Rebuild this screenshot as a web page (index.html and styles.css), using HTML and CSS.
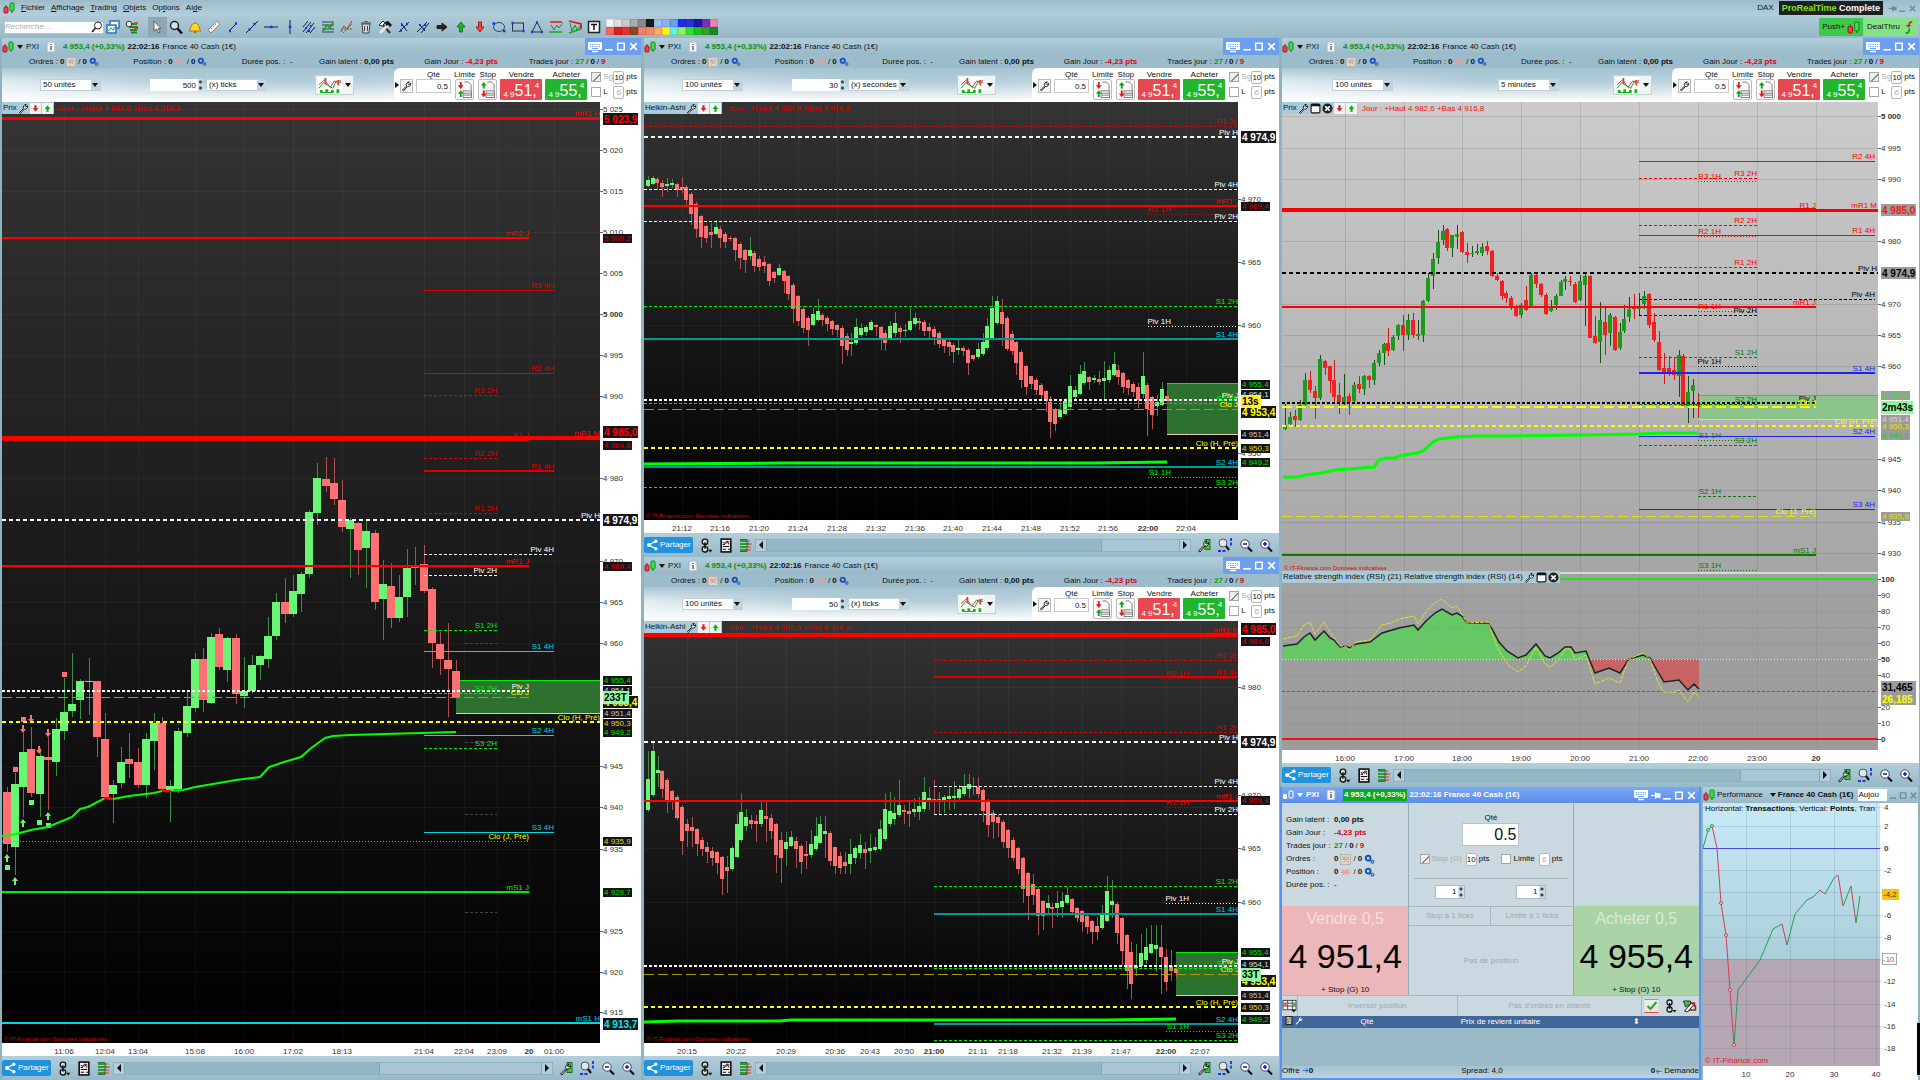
FILE: index.html
```html
<!DOCTYPE html>
<html lang="fr">
<head>
<meta charset="utf-8">
<title>ProRealTime Complete</title>
<link rel="stylesheet" href="styles.css">
</head>
<body>
<svg class="sprite" aria-hidden="true">
  <symbol id="i-candles" viewBox="0 0 12 12"><path d="M3 3v8M9 1v10" stroke="#444"/><rect x="1" y="5" width="4" height="6" rx="1" fill="#f0404a" stroke="#a01820"/><rect x="7" y="1" width="4" height="8" rx="1" fill="#3ee04a" stroke="#128a20"/></symbol>
  <symbol id="i-candles-white" viewBox="0 0 12 12"><rect x="1" y="5" width="4" height="5" rx="1" fill="#fff"/><rect x="7" y="2" width="4" height="7" rx="1" fill="none" stroke="#fff"/></symbol>
  <symbol id="i-info" viewBox="0 0 10 10"><rect x="1" y="0" width="8" height="10" rx="1" fill="#f4f4f4" stroke="#aab"/><path d="M5 4v4M5 2v1" stroke="#567" stroke-width="1.5"/></symbol>
  <symbol id="i-keyboard" viewBox="0 0 16 12"><rect x="1" y="1" width="14" height="8" rx="1" fill="#fff"/><path d="M3 3.500h10M3 5.500h10" stroke="#6c9ff0" stroke-dasharray="1.200 1"/><path d="M5 7.500h6" stroke="#6c9ff0"/><path d="M5 10.500h6" stroke="#fff" stroke-width="1.500"/></symbol>
  <symbol id="i-min" viewBox="0 0 10 10"><path d="M1 8h7" stroke="currentColor" stroke-width="1.500"/></symbol>
  <symbol id="i-max" viewBox="0 0 10 10"><rect x="1.500" y="2" width="6" height="6" fill="none" stroke="currentColor" stroke-width="1.300"/></symbol>
  <symbol id="i-close" viewBox="0 0 10 10"><path d="M2 2l6 6M8 2l-6 6" stroke="currentColor" stroke-width="1.500"/></symbol>
  <symbol id="i-pin" viewBox="0 0 10 10"><path d="M1 5h4" stroke="currentColor" stroke-width="1.200"/><path d="M5 2v6M5 3.500h4v3H5z" stroke="currentColor" fill="currentColor"/></symbol>
  <symbol id="i-gears" viewBox="0 0 12 12"><circle cx="4.500" cy="4.500" r="2.600" fill="none" stroke="#1c4fb4" stroke-width="2.200"/><circle cx="9.200" cy="8.500" r="1.500" fill="none" stroke="#2a66d0" stroke-width="1.400"/></symbol>
  <symbol id="i-cancel" viewBox="0 0 10 10"><rect x=".5" y=".5" width="9" height="9" fill="#dcd8d2" stroke="#b9b4b0"/><path d="M2 3h6M2 5h4M3 7.500l5-4M3 3.500l5 4" stroke="#d69a92"/></symbol>
  <symbol id="i-flat" viewBox="0 0 10 10"><path d="M1 3h8M1 5h8M2 7.500l6-5M2 3l6 4.500" stroke="#ec9c9c"/></symbol>
  <symbol id="i-wrench" viewBox="0 0 12 12"><path d="M1.500 10.500L6 6c-1-2 .5-4.500 3-4.500L7.500 3.500l1 1 2-1.500c.5 2.500-1.500 4-3.500 3.500L2.800 11.300z" fill="#fff" stroke="#111"/></symbol>
  <symbol id="i-wrench-white" viewBox="0 0 12 12"><path d="M1.500 10.500L6 6c-1-2 .5-4.500 3-4.500L7.500 3.500l1 1 2-1.500c.5 2.500-1.500 4-3.500 3.500L2.800 11.300z" fill="#fff"/></symbol>
  <symbol id="i-wrench-green" viewBox="0 0 14 14"><rect x="8" y="1" width="5" height="10" fill="#3cc43c" stroke="#207020"/><path d="M1.500 12.500L7 7c-1-2 .5-4.500 3-4.500L8.500 4.500l1 1 2-1.500c.5 2.500-1.500 4-3.500 3.500L3 13.500z" fill="#eee" stroke="#111"/></symbol>
  <symbol id="i-sell" viewBox="0 0 10 10"><rect width="10" height="10" fill="#f6f2f2"/><path d="M5 2v3" stroke="#e02020" stroke-width="2"/><path d="M2.500 4.500h5L5 8z" fill="#e02020"/></symbol>
  <symbol id="i-buy" viewBox="0 0 10 10"><rect width="10" height="10" fill="#f2f6f2"/><path d="M5 8V5" stroke="#12a812" stroke-width="2"/><path d="M2.500 5.500h5L5 2z" fill="#12a812"/></symbol>
  <symbol id="i-window" viewBox="0 0 10 10"><rect x="1" y="1" width="8" height="8" rx="1" fill="#fff" stroke="#111"/><path d="M1 2h8" stroke="#111" stroke-width="2"/></symbol>
  <symbol id="i-x-round" viewBox="0 0 10 10"><circle cx="5" cy="5" r="4.600" fill="#222"/><path d="M3 3l4 4M7 3L3 7" stroke="#fff" stroke-width="1.500"/></symbol>
  <symbol id="i-limit" viewBox="0 0 16 18"><path d="M8 1h4l3 3v6" fill="#fff" stroke="#777"/><rect x="6.500" y="10.500" width="9" height="7" fill="#fff" stroke="#777"/><path d="M7 13h8M7 15h8" stroke="#777"/><path d="M4 1v4" stroke="#e01818" stroke-width="2"/><path d="M1 4.500h6L4 8.500z" fill="#e01818"/><path d="M4 17v-4" stroke="#12a012" stroke-width="2"/><path d="M1 13.500h6L4 9.800z" fill="#12a012"/></symbol>
  <symbol id="i-stop" viewBox="0 0 16 18"><path d="M8 1h4l3 3v6" fill="#fff" stroke="#777"/><rect x="6.500" y="10.500" width="9" height="7" fill="#fff" stroke="#777"/><path d="M7 13h8M7 15h8" stroke="#777"/><path d="M4 8V4" stroke="#12a012" stroke-width="2"/><path d="M1 4.800h6L4 1z" fill="#12a012"/><path d="M4 10v4" stroke="#e01818" stroke-width="2"/><path d="M1 13.500h6L4 17.300z" fill="#e01818"/></symbol>
  <symbol id="i-chart" viewBox="0 0 26 18"><rect width="26" height="18" fill="#fff"/><path d="M1 8l6-5 6 8 5-7 3 2 4-3" fill="none" stroke="#c03030"/><path d="M1 12l5-6 5 3 5 3 4-8 5 2" fill="none" stroke="#189018"/><path d="M8 1v6M22 3v6" stroke="#e04040" stroke-width="2"/><path d="M2 17v-3h3v2h3v-3h3v3h3v-2h3v3h3v-4h3v4z" fill="#12b812"/></symbol>
  <symbol id="i-share" viewBox="0 0 12 12"><path d="M10 2L3 6l7 4" fill="none" stroke="#fff" stroke-width="1.300"/><circle cx="3" cy="6" r="2" fill="#fff"/><circle cx="9.800" cy="2.200" r="1.700" fill="#fff"/><circle cx="9.800" cy="9.800" r="1.700" fill="#fff"/></symbol>
  <symbol id="i-chain" viewBox="0 0 12 14"><rect x="2.500" y="1" width="5" height="5" rx="2" fill="#ddd" stroke="#111" stroke-width="1.300"/><rect x="2.500" y="8" width="5" height="5" rx="2" fill="#ddd" stroke="#111" stroke-width="1.300"/><path d="M5 4v6" stroke="#111" stroke-width="1.300"/><path d="M8 11h4l-2 2.500z" fill="#111"/></symbol>
  <symbol id="i-news" viewBox="0 0 12 14"><rect x="1.500" y="1" width="9" height="12" fill="#eee" stroke="#111" stroke-width="1.500"/><path d="M3 4l2 1 2-2 2 3" fill="none" stroke="#333"/><path d="M6 5l3-2" stroke="#c02020"/><path d="M3 8h6M3 10.500h3M8 10.500h2M3 6h2" stroke="#111"/></symbol>
  <symbol id="i-book" viewBox="0 0 14 14"><path d="M1 2.500h7M1 5.500h9M1 8.500h7M1 11.500h8" stroke="#28a028" stroke-width="2"/><path d="M8 2.500h3M10 5.500h3M8 8.500h4M9 11.500h3" stroke="#d87070" stroke-width="2"/><path d="M1 1h7v12H1" stroke="#486048" fill="none"/></symbol>
  <symbol id="i-zoomxy" viewBox="0 0 16 16"><circle cx="6" cy="6" r="4" fill="#dfe8ee" stroke="#555"/><path d="M9 9l3 4" stroke="#111" stroke-width="2.200"/><path d="M14 1v9M1 14h8" stroke="#2030e0" stroke-width="1.800" stroke-dasharray="3 1.500"/></symbol>
  <symbol id="i-zoomout" viewBox="0 0 14 14"><circle cx="6" cy="5.500" r="4.200" fill="#fff" stroke="#445"/><path d="M4 5.500h4" stroke="#1020d0" stroke-width="1.600"/><path d="M9 9l4 4" stroke="#111" stroke-width="2.200"/></symbol>
  <symbol id="i-zoomin" viewBox="0 0 14 14"><circle cx="6" cy="5.500" r="4.200" fill="#fff" stroke="#445"/><path d="M4 5.500h4M6 3.500v4" stroke="#1020d0" stroke-width="1.600"/><path d="M9 9l4 4" stroke="#111" stroke-width="2.200"/></symbol>
  <symbol id="i-search" viewBox="0 0 12 12"><circle cx="7" cy="4.500" r="3.500" fill="none" stroke="#222"/><path d="M4.500 7L1 11" stroke="#222" stroke-width="1.600"/></symbol>
  <symbol id="i-lists" viewBox="0 0 14 14"><rect x="4" y="1" width="9" height="7" fill="#fff" stroke="#2a6ac0" stroke-width="1.400"/><rect x="1" y="5" width="9" height="8" fill="#dff0ff" stroke="#2a6ac0" stroke-width="1.400"/><path d="M2 11l3-3 2 2 3-4" stroke="#28a028" fill="none"/></symbol>
  <symbol id="i-depth" viewBox="0 0 14 14"><path d="M5 4h7M4 7h9M5 10h7M6 12.500h6" stroke="#208a20" stroke-width="1.800"/><path d="M9 3h4M9 8.500h4" stroke="#d04040" stroke-width="1.500"/><circle cx="4" cy="4" r="2.800" fill="#eee" stroke="#333"/></symbol>
  <symbol id="i-cursor" viewBox="0 0 14 14"><path d="M4 1v10l2.500-2 2 4 1.500-1-2-3.500h3z" fill="#f4f4f4" stroke="#566"/></symbol>
  <symbol id="i-loupe" viewBox="0 0 14 14"><circle cx="5.500" cy="5.500" r="4" fill="#d5e2ea" stroke="#222" stroke-width="1.500"/><path d="M8.500 8.500l4.500 5" stroke="#111" stroke-width="2.500"/></symbol>
  <symbol id="i-bell" viewBox="0 0 14 14"><path d="M1 11c2-1 1.500-8 6-8s4 7 6 8z" fill="#ffd52a" stroke="#a07a10"/><circle cx="7" cy="12" r="1.300" fill="#a07a10"/></symbol>
  <symbol id="i-ruler" viewBox="0 0 14 14"><path d="M1 10L10 1l3 3-9 9z" fill="#f2efe6" stroke="#888"/><path d="M4 8l1 1M6 6l1 1M8 4l1 1" stroke="#888"/></symbol>
  <symbol id="i-segment" viewBox="0 0 14 14"><path d="M4 10l6-6" stroke="#123" /><path d="M3 11h2M9 3.500h2" stroke="#1a30f0" stroke-width="2.500"/></symbol>
  <symbol id="i-line" viewBox="0 0 14 14"><path d="M1 13L13 1" stroke="#123"/><path d="M3.500 9.500h2M8.500 4h2" stroke="#1a30f0" stroke-width="2.500"/></symbol>
  <symbol id="i-hline" viewBox="0 0 14 14"><path d="M0 7h14" stroke="#123"/><path d="M6 7h2.500" stroke="#1a30f0" stroke-width="2.500"/></symbol>
  <symbol id="i-vline" viewBox="0 0 14 14"><path d="M7 0v14" stroke="#123"/><path d="M5.800 7h2.400" stroke="#1a30f0" stroke-width="2.500"/></symbol>
  <symbol id="i-channel" viewBox="0 0 14 14"><path d="M1 12L9 2M4 13l8-10M1 7l5-6M8 13l5-6" stroke="#123"/><path d="M3 8h2M8 6h2M6 11h2" stroke="#1a30f0" stroke-width="2"/></symbol>
  <symbol id="i-fibo" viewBox="0 0 14 14"><path d="M1 2h12M1 5h12M1 9h12M1 12h12" stroke="#345"/><path d="M2 11l4-6 3 3 3-5" stroke="#1a9a1a" stroke-width="1.500" fill="none"/></symbol>
  <symbol id="i-zigzag" viewBox="0 0 14 14"><path d="M1 12l3-6 3 3 5-8" stroke="#c03030" fill="none"/><path d="M1 9h12M3 13l9-9" stroke="#1a8a1a" stroke-dasharray="2 1"/></symbol>
  <symbol id="i-trash" viewBox="0 0 14 14"><path d="M3 4h8l-1 9H4z" fill="#d8d8d8" stroke="#444"/><path d="M2 3h10M5.500 1.500h3M5.500 6v5M8.500 6v5" stroke="#444"/></symbol>
  <symbol id="i-tools" viewBox="0 0 14 14"><path d="M4 4l8 9" stroke="#333" stroke-width="2"/><path d="M1 5l4-4 2 2-3 3z" fill="#fff" stroke="#333"/><path d="M10 5L2 13" stroke="#eee" stroke-width="2.500"/><path d="M7 2l3-1 4 4-2 2-2-2-2 1z" fill="#111"/></symbol>
  <symbol id="i-cross" viewBox="0 0 14 14"><path d="M2 12L12 2M4 3l6 8" stroke="#123"/><path d="M3 10.500h2M9 4h2M4 5h2" stroke="#1a30f0" stroke-width="2.500"/></symbol>
  <symbol id="i-pitch" viewBox="0 0 14 14"><path d="M1 12L11 2M5 13l8-10M3 4l6 7" stroke="#123"/><path d="M3 5h2M8 5h2M7 9h2" stroke="#1a30f0" stroke-width="2"/></symbol>
  <symbol id="i-right" viewBox="0 0 14 14"><path d="M2 5.500h5V3l5 4-5 4V8.500H2z" fill="#222" stroke="#222"/></symbol>
  <symbol id="i-up" viewBox="0 0 14 14"><path d="M5.500 12V7H3L7 2l4 5H8.500v5z" fill="#18b828" stroke="#0a7a16"/></symbol>
  <symbol id="i-down" viewBox="0 0 14 14"><path d="M5.500 2v5H3l4 5 4-5H8.500V2z" fill="#f04040" stroke="#b01818"/></symbol>
  <symbol id="i-ellipse" viewBox="0 0 14 14"><ellipse cx="7" cy="7" rx="5.500" ry="4.500" fill="none" stroke="#345"/><path d="M.5 3.500h2.500M11 11h2.500" stroke="#1a30f0" stroke-width="2.500"/></symbol>
  <symbol id="i-rect" viewBox="0 0 14 14"><rect x="1.500" y="3" width="11" height="8" fill="none" stroke="#234"/><path d="M.5 3h2M11.500 11h2" stroke="#1a30f0" stroke-width="2.500"/></symbol>
  <symbol id="i-tri" viewBox="0 0 14 14"><path d="M2 12L7 2l5 10z" fill="none" stroke="#234"/><path d="M1 12h2M11 12h2M6 2.500h2" stroke="#1a30f0" stroke-width="2.500"/></symbol>
  <symbol id="i-range" viewBox="0 0 14 14"><path d="M1 2h12" stroke="#e01818" stroke-width="1.500"/><path d="M0 12h13" stroke="#12b012" stroke-width="1.500"/><path d="M2 5l3 5 3-5 2 3 4-5" fill="none" stroke="#189018"/></symbol>
  <symbol id="i-wedge" viewBox="0 0 14 14"><path d="M1 1l12 3v5" stroke="#e01818" stroke-width="1.800" fill="none"/><path d="M1 13L13 9" stroke="#12b012" stroke-width="1.800"/><path d="M2 3l2 8 3-6 2 5 3-4" fill="none" stroke="#189018"/></symbol>
  <symbol id="i-note" viewBox="0 0 14 14"><rect x="1.500" y="1.500" width="11" height="11" fill="#f6f6f6" stroke="#222" stroke-width="1.500"/><path d="M4 4.500h6M7 4.500V10" stroke="#111" stroke-width="1.500"/></symbol>
  <symbol id="i-deal" viewBox="0 0 12 14"><path d="M10 1c-4 0-4 4-4 6" stroke="#d02020" stroke-width="1.800" fill="none"/><path d="M3 5h6" stroke="#d02020"/><path d="M3 13c3 0 4-2 4-5" stroke="#189018" stroke-width="1.800" fill="none"/></symbol>
  <symbol id="i-grid" viewBox="0 0 16 14"><rect x="1" y="1" width="14" height="10" fill="#f4f4f4" stroke="#444"/><path d="M1 4h14M1 7h14M6 1v10M11 1v10" stroke="#444"/><rect x="2" y="4" width="4" height="3" fill="#f06060"/><rect x="11" y="4" width="4" height="3" fill="#40c040"/><path d="M10 11h5l-2.500 3z" fill="#111"/></symbol>
  <symbol id="i-confirm" viewBox="0 0 14 14"><rect x="0" y="0" width="14" height="7" fill="#def4de"/><rect x="0" y="7" width="14" height="7" fill="#f6dcdc"/><path d="M0 13.500h14" stroke="#e04848"/><path d="M0 .5h14" stroke="#60c060"/><path d="M3 7l3 3 6-7" stroke="#28a828" stroke-width="2" fill="none"/></symbol>
  <symbol id="i-export" viewBox="0 0 14 14"><path d="M1 2h7v3L3 8z" fill="#3cc43c" stroke="#333"/><path d="M8 4h4v3h1v4H6" fill="none" stroke="#a02020" stroke-width="1.500"/><path d="M2 12l7-8 2 2-6 7z" fill="#eee" stroke="#222"/></symbol>
</svg>

<header class="app-head">
  <nav class="menubar">
    <svg class="ico"><use href="#i-candles"/></svg>
    <a href="#"><u>F</u>ichier</a><a href="#"><u>A</u>ffichage</a><a href="#"><u>T</u>rading</a><a href="#"><u>O</u>bjets</a><a href="#">Op<u>t</u>ions</a><a href="#">Ai<u>d</u>e</a>
    <div class="brand"><span>DAX</span><span class="badge"><em>ProRealTime</em> Complete</span>
      <span class="sysbtns"><svg><use href="#i-pin"/></svg><svg><use href="#i-min"/></svg><svg><use href="#i-close"/></svg></span></div>
  </nav>
  <div class="toolbar">
    <label class="search"><input type="text" placeholder="Recherche ..." aria-label="Recherche"><svg><use href="#i-search"/></svg></label>
    <div class="tools" id="tools"></div>
    <div class="palette" id="palette"></div>
    <div class="quick"><button class="push">Push+ <svg><use href="#i-candles"/></svg></button><button class="deal">DealThru <svg><use href="#i-deal"/></svg></button></div>
  </div>
</header>

<template id="chart-window">
  <header class="titlebar">
    <svg class="ico"><use href="#i-candles"/></svg><span class="caret"></span><span>PXI</span>
    <svg class="info"><use href="#i-info"/></svg>
    <b class="quote">4 953,4 (+0,33%)</b><b>22:02:16</b><span>France 40 Cash (1€)</span>
    <div class="winbtns"><button aria-label="Clavier"><svg class="kbd"><use href="#i-keyboard"/></svg></button><button aria-label="Réduire"><svg><use href="#i-min"/></svg></button><button aria-label="Agrandir"><svg><use href="#i-max"/></svg></button><button aria-label="Fermer"><svg><use href="#i-close"/></svg></button></div>
  </header>
  <div class="stats">
    <span>Ordres : <b>0</b> <svg><use href="#i-cancel"/></svg> / <b>0</b><svg><use href="#i-gears"/></svg></span>
    <span>Position : <b>0</b> <svg><use href="#i-flat"/></svg> / <b>0</b><svg><use href="#i-gears"/></svg></span>
    <span>Durée pos. : &nbsp;-</span>
    <span>Gain latent : <b>0,00 pts</b></span>
    <span>Gain Jour : <b class="neg">-4,23 pts</b></span>
    <span>Trades jour : <b class="pos">27</b> / <b>0</b> / <b class="neg">9</b></span>
  </div>
  <div class="controls">
    <span class="select units"><select aria-label="Unités affichées"><option></option></select></span>
    <span class="period"><input class="amount" type="text" aria-label="Nombre"><span class="spin"></span><span class="select"><select class="step" aria-label="Unité de temps"><option></option></select></span></span>
    <button class="style-btn" aria-label="Style du graphique"><svg><use href="#i-chart"/></svg><span class="caret"></span></button>
    <div class="ticket">
      <span class="caret side"></span>
      <button class="flatbtn" aria-label="Réglages"><svg><use href="#i-wrench"/></svg></button>
      <label class="col qty">Qté<input type="text" value="0.5"></label>
      <label class="col">Limite<button class="order"><svg><use href="#i-limit"/></svg></button></label>
      <label class="col">Stop<button class="order"><svg><use href="#i-stop"/></svg></button></label>
      <label class="col">Vendre<button class="deal-btn sell"><small>4 9</small>51,<sup>4</sup></button></label>
      <label class="col">Acheter<button class="deal-btn buy"><small>4 9</small>55,<sup>4</sup></button></label>
      <div class="guards">
        <label class="off"><input type="checkbox" checked disabled>Sg</label><label class="pts"><input type="text" value="10">pts</label>
        <label><input type="checkbox">L</label><label class="pts"><input type="text" value="6" disabled>pts</label>
      </div>
    </div>
  </div>
  <div class="plot">
    <svg class="canvas"></svg>
    <div class="legend"><span class="name"></span><svg><use href="#i-wrench"/></svg><span class="extra"><svg><use href="#i-window"/></svg><svg><use href="#i-x-round"/></svg></span><svg><use href="#i-sell"/></svg><svg><use href="#i-buy"/></svg></div>
  </div>
  <footer class="bottombar">
    <button class="share"><svg><use href="#i-share"/></svg>Partager</button>
    <svg><use href="#i-chain"/></svg><svg><use href="#i-news"/></svg><svg><use href="#i-book"/></svg>
    <div class="scroll"><button class="arrow left" aria-label="Reculer"></button><div class="track"><div class="thumb"></div></div><button class="arrow right" aria-label="Avancer"></button></div>
    <svg><use href="#i-wrench-green"/></svg><svg class="big"><use href="#i-zoomxy"/></svg><svg><use href="#i-zoomout"/></svg><svg><use href="#i-zoomin"/></svg>
  </footer>
</template>

<main class="desk">
  <div class="column"><section class="window chart" data-chart="ticks500"></section></div>
  <div class="column mid">
    <section class="window chart" data-chart="sec30"></section>
    <section class="window chart" data-chart="ticks50"></section>
  </div>
  <div class="column right">
    <section class="window chart light" data-chart="min5"></section>
    <div class="pair">
      <section class="window ordering">
        <header class="titlebar active">
          <svg class="ico"><use href="#i-candles-white"/></svg><span class="caret"></span><b>PXI</b>
          <svg class="info"><use href="#i-info"/></svg><b class="quote">4 953,4 (+0,33%)</b><b>22:02:16 France 40 Cash (1€)</b>
          <div class="winbtns"><button aria-label="Clavier"><svg class="kbd"><use href="#i-keyboard"/></svg></button><button aria-label="Épingler"><svg><use href="#i-pin"/></svg></button><button aria-label="Réduire"><svg><use href="#i-min"/></svg></button><button aria-label="Agrandir"><svg><use href="#i-max"/></svg></button><button aria-label="Fermer"><svg><use href="#i-close"/></svg></button></div>
        </header>
        <div class="deal-grid">
          <dl class="summary">
            <dt>Gain latent :</dt><dd><b>0,00 pts</b></dd>
            <dt>Gain Jour :</dt><dd><b class="neg">-4,23 pts</b></dd>
            <dt>Trades jour :</dt><dd><b class="pos">27</b> / <b>0</b> / <b class="neg">9</b></dd>
            <dt>Ordres :</dt><dd><b>0</b> <svg><use href="#i-cancel"/></svg> / <b>0</b><svg><use href="#i-gears"/></svg></dd>
            <dt>Position :</dt><dd><b>0</b> <svg><use href="#i-flat"/></svg> / <b>0</b><svg><use href="#i-gears"/></svg></dd>
            <dt>Durée pos. :</dt><dd>-</dd>
          </dl>
          <div class="setup">
            <label class="bigqty">Qté<input type="text" value="0.5"></label>
            <div class="guardline">
              <label class="off"><input type="checkbox" checked disabled>Stop (G)</label><label class="pts"><input type="text" value="10">pts</label>
              <label><input type="checkbox">Limite</label><label class="pts"><input type="text" value="6" disabled>pts</label>
            </div>
            <div class="tickline">
              <span><input type="text" value="1" aria-label="Ticks du stop"><i class="spin"></i></span>
              <span><input type="text" value="1" aria-label="Ticks de la limite"><i class="spin"></i></span>
            </div>
          </div>
          <div class="blank"></div>
          <button class="trade sell"><span>Vendre 0,5</span><strong>4 951,4</strong><small>+ Stop (G) 10</small></button>
          <div class="middle">
            <button disabled>Stop à 1 ticks</button><button disabled>Limite à 1 ticks</button>
            <button class="wide" disabled>Pas de position</button>
          </div>
          <button class="trade buy"><span>Acheter 0,5</span><strong>4 955,4</strong><small>+ Stop (G) 10</small></button>
        </div>
        <div class="actions">
          <button aria-label="Affichage"><svg><use href="#i-grid"/></svg></button>
          <button class="grow" disabled>Inverser position</button><button class="grow wide" disabled>Pas d'ordres en attente</button>
          <span class="tail"><svg><use href="#i-confirm"/></svg><svg><use href="#i-chain"/></svg><svg><use href="#i-export"/></svg></span>
        </div>
        <table class="positions"><thead><tr><th><svg><use href="#i-news"/></svg><svg><use href="#i-wrench-white"/></svg></th><th>Qté</th><th>Prix de revient unitaire</th><th>⬍</th></tr></thead></table>
        <footer class="spread"><span>Offre <i>➔</i><b>0</b></span><span>Spread: 4,0</span><span><b>0</b><i class="flip">➔</i> Demande</span></footer>
      </section>
      <section class="window perf">
        <header class="titlebar"><svg class="ico"><use href="#i-candles"/></svg><span>Performance</span><span class="caret"></span><b>France 40 Cash (1€)</b><span class="period-cut">Aujou</span>
          <div class="sysbtns"><svg><use href="#i-min"/></svg><svg><use href="#i-max"/></svg><svg><use href="#i-close"/></svg></div></header>
        <div class="plot"><svg class="canvas" id="perf"></svg><p class="caption">Horizontal: <b>Transactions</b>, Vertical: <b>Points</b>, Tran</p></div>
      </section>
      <span class="edge"></span>
    </div>
  </div>
</main>
<script src="charts.js"></script>
</body>
</html>
```

FILE: styles.css
```css
* { box-sizing: border-box; }
html, body { height: 100%; margin: 0; }
body {
  display: flex; flex-direction: column; min-height: 100vh; overflow: hidden;
  font: 8px/10px "Liberation Sans", Arial, sans-serif; color: #111; background: #8fb2c1;
}
button, input, select { font: inherit; color: inherit; margin: 0; padding: 0; border: 0; border-radius: 0; background: none; }
button { cursor: pointer; }
svg { display: block; flex: none; }
.sprite { position: absolute; width: 0; height: 0; }
.neg { color: #e00010; }
.pos { color: #0a9a14; }
.caret { flex: none; width: 0; height: 0; border: 3px solid transparent; border-top: 4px solid #111; border-bottom: 0; }
.caret.side { border: 3px solid transparent; border-left: 4px solid #111; border-right: 0; }

/* application header */
.app-head { flex: none; }
.menubar { display: flex; align-items: center; gap: 6px; height: 16px; padding: 0 3px; background: linear-gradient(#9dbccb, #b4cfdb); }
.menubar a { color: #111; text-decoration: none; }
.menubar .ico { width: 12px; height: 12px; }
.brand { display: flex; align-items: center; gap: 5px; margin-left: auto; }
.badge { padding: 2px 3px; background: #1d2123; color: #fff; font-weight: bold; font-size: 9px; }
.badge em { font-style: normal; color: #8de01c; }
.sysbtns { display: flex; gap: 1px; color: #6d8894; }
.sysbtns svg { width: 9px; height: 9px; }
.toolbar { display: flex; align-items: center; height: 22px; padding: 0 2px 0 4px; background: linear-gradient(#aecad6, #97b8c7); }
.search { display: flex; align-items: center; width: 100px; height: 13px; background: #fff; border: 1px solid #b6c6cf; }
.search input { flex: 1; min-width: 0; outline: 0; }
.search input::placeholder { color: #aaa; font-style: italic; opacity: 1; }
.search svg { width: 12px; height: 12px; }
.tools { display: flex; }
.tools button { width: 19px; height: 20px; padding: 3px 2px; }
.tools button.on { background: #8da7b4; }
.tools button:nth-child(2) { margin-right: 6px; }
.tools svg { width: 14px; height: 14px; }
.palette { display: grid; grid-template-columns: repeat(14, 8px); grid-auto-rows: 8px; margin-left: 2px; }
.palette button { border: 1px solid rgba(0, 0, 0, .1); }
.quick { display: flex; gap: 1px; margin-left: auto; }
.quick button { display: flex; align-items: center; gap: 2px; height: 18px; padding: 0 3px; }
.quick svg { width: 13px; height: 13px; }
.push { background: #3fc94b; }
.deal { background: #85e387; }

/* desktop and windows */
.desk { flex: 1; min-height: 0; display: grid; grid-template-columns: 642fr 638fr 640fr; }
.column { display: grid; grid-auto-rows: minmax(0, 1fr); min-width: 0; min-height: 0; }
.column.mid { grid-template-rows: minmax(0, 519fr) minmax(0, 523fr); }
.column.right { grid-template-rows: minmax(0, 749fr) minmax(0, 293fr); }
.window { display: flex; flex-direction: column; min-width: 0; min-height: 0; border: solid #8fb2c1; border-width: 0 1px 0 2px; background: #9bbac8; overflow: hidden; }
.titlebar { flex: none; display: flex; align-items: center; gap: 3px; height: 17px; background: linear-gradient(#b2cedb, #98b9c8); white-space: nowrap; }
.titlebar .ico { width: 12px; height: 12px; }
.titlebar .info { width: 10px; height: 10px; margin: 0 4px; }
.quote { color: #0a8f12; }
.winbtns { display: flex; align-items: center; gap: 1px; height: 100%; margin-left: auto; padding: 0 2px; background: #6c9ff0; color: #fff; }
.winbtns svg { width: 11px; height: 11px; }
.winbtns .kbd { width: 16px; height: 12px; }
.stats { flex: none; display: grid; grid-template-columns: 104fr 108fr 77fr 105fr 104fr 112fr; align-items: center; height: 13px; padding-left: 27px; background: #9cbccb; white-space: nowrap; }
.stats span { display: flex; align-items: center; gap: 2px; }
.stats svg { width: 10px; height: 10px; }
.controls { flex: none; display: flex; align-items: center; height: 34px; padding-left: 38px; background: linear-gradient(rgba(164, 194, 208, .9), rgba(255, 255, 255, .1) 40%, #fff), linear-gradient(90deg, #dce9ee, #a9c7d4 30%, #a9c7d4 50%, #dce9ee); }
.select { position: relative; display: flex; width: 61px; height: 12px; background: #fff; border: 1px solid #c3d0d7; }
.select select { appearance: none; width: 100%; padding-left: 2px; outline: 0; }
.select::before { content: ""; position: absolute; right: 0; top: 0; width: 9px; height: 10px; background: #bdd6e2; pointer-events: none; }
.select::after { content: ""; position: absolute; right: 2px; top: 3px; border: 3px solid transparent; border-top: 4px solid #111; border-bottom: 0; pointer-events: none; }
.period { display: flex; width: 117px; margin: 0 48px 0 49px; }
.period .select { margin-left: auto; }
.amount { width: 48px; height: 12px; background: #fff; text-align: right; padding-right: 2px; }
.spin { flex: none; width: 5px; height: 12px; background: radial-gradient(circle at 50% 3px, #345 1px, transparent 2px), radial-gradient(circle at 50% 9px, #345 1px, transparent 2px), #c9dde6; }
.single .amount, .single .spin { display: none; }
.single .units { margin-left: 12px; }
.single .period { justify-content: flex-end; }
.single .style-btn { margin-left: 6px; }
.style-btn { display: flex; align-items: center; gap: 3px; height: 20px; padding: 0 2px; background: #eef3f5; border: 1px solid #c6d2d8; }
.style-btn svg { width: 24px; height: 17px; }
.ticket { display: flex; align-items: flex-start; gap: 3px; width: 247px; height: 100%; margin-left: auto; padding-top: 2px; background: #fff; border-radius: 6px 0 0 6px; }
.ticket .side { margin: 12px -2px 0 1px; }
.flatbtn { margin-top: 9px; padding: 0; width: 13px; height: 14px; border: 1px solid #bbb; background: #f6f6f6; }
.flatbtn svg { width: 11px; height: 12px; }
.col { display: flex; flex-direction: column; align-items: center; line-height: 9px; }
.qty input { width: 35px; height: 14px; border: 1px solid #c8c8c8; text-align: right; padding-right: 2px; }
.order { padding: 1px; border: 1px solid #bbb; border-radius: 2px; background: #fafafa; }
.order svg { width: 15px; height: 17px; }
.deal-btn { display: flex; align-items: flex-end; justify-content: center; width: 42px; height: 21px; color: #fff; font-size: 16px; line-height: 19px; border-radius: 1px; }
.deal-btn small { font-size: 8px; line-height: 11px; }
.deal-btn sup { align-self: flex-start; margin-left: -2px; font-size: 8px; line-height: 13px; }
.deal-btn.sell { background: #e8484f; }
.deal-btn.buy { background: #21b62e; }
.guards { display: grid; grid-template-columns: 22px 26px; row-gap: 1px; margin-left: 1px; }
.guards label, .guardline label { display: flex; align-items: center; gap: 2px; height: 14px; white-space: nowrap; }
.guards input, .guardline input[type=checkbox] { flex: none; width: 10px; height: 10px; }
input[type=checkbox] { appearance: none; background: #fff; border: 1px solid #9aa; }
input[type=checkbox]:checked { background: linear-gradient(135deg, transparent 55%, #888 55% 68%, transparent 68%), #eee; }
.guards .pts input, .guardline .pts input { width: 11px; height: 13px; border: 1px solid #b5b5b5; border-radius: 2px; background: #fff; text-align: center; }
input:disabled, .off { color: #aaa; }

/* plot area */
.plot { position: relative; flex: 1; min-height: 0; background: #fff; }
.canvas { position: absolute; inset: 0; width: 100%; height: 100%; shape-rendering: crispEdges; }
.canvas text { font: 8px "Liberation Sans", Arial, sans-serif; }
.canvas .big { font-size: 10px; font-weight: bold; }
.canvas .bold { font-weight: bold; }
.canvas .soft { shape-rendering: auto; }
.canvas .credit { font-size: 6px; fill: #d00; }
.canvas .axis { fill: #333; }
.canvas .lv { stroke: var(--c); fill: none; }
.canvas .lb { fill: var(--c); }
.red { --c: #f00; } .dred { --c: #dc0000; } .white { --c: #fff; } .green { --c: #0e0; } .dgreen { --c: #087a08; }
.cyan { --c: #00d8e0; } .teal { --c: #009a9a; } .yellow { --c: #ff0; } .olive { --c: #a89b00; } .dim { --c: #444; }
.light .white { --c: #000; } .light .green { --c: #0a7a0a; } .light .cyan { --c: #2020f0; } .light .olive { --c: #e8e000; }
.dash { stroke-dasharray: 3 2; } .dot { stroke-dasharray: 1 2; } .long { stroke-dasharray: 10 4; } .thickdot { stroke-dasharray: 4 3; }
.w2 { stroke-width: 2; } .w3 { stroke-width: 3; } .w4 { stroke-width: 4; }
.legend { position: absolute; left: 0; top: 0; display: flex; align-items: center; gap: 1px; height: 12px; padding: 0 1px; background: #a9cad8; white-space: nowrap; }
.legend svg { width: 11px; height: 11px; }
.legend .extra { display: none; gap: 1px; }
.light .legend .extra { display: flex; }
.legend.rsi { top: 71%; }

/* window footer */
.bottombar { flex: none; display: flex; align-items: center; gap: 6px; height: 24px; padding: 0 6px 0 0; background: linear-gradient(#b3cedb, #98b9c8); }
.bottombar > svg { width: 14px; height: 15px; }
.bottombar > .big { width: 16px; height: 16px; }
.share { display: flex; align-items: center; gap: 2px; width: 49px; height: 16px; padding: 0 2px; background: #2292dd; color: #fff; border-radius: 2px; }
.share svg { width: 12px; height: 12px; }
.scroll { flex: 1; display: flex; height: 13px; margin-left: -4px; border: 1px solid #8fb0be; }
.arrow { display: grid; place-items: center; width: 10px; background: #b3cedb; }
.arrow::after { content: ""; border: 4px solid transparent; }
.arrow.left::after { border-left: 0; border-right-color: #111; }
.arrow.right::after { border-right: 0; border-left-color: #111; }
.track { flex: 1; display: flex; justify-content: flex-end; background: #94b6c5; border: solid #85a6b5; border-width: 0 1px; }
.thumb { width: 19%; background: #a8c6d3; border-left: 1px solid #85a6b5; }
.wide-thumb .thumb { width: 39%; }

/* ordering window */
.pair { position: relative; display: grid; grid-template-columns: 421fr 219fr; min-height: 0; }
.ordering { border: solid #5c90ea; border-width: 0 2px 2px; background: #9bbac8; }
.titlebar.active { background: linear-gradient(#7aa8f6, #5a8eea); color: #fff; height: 16px; }
.titlebar.active .caret { border-top-color: #fff; }
.titlebar.active .quote { background: #0fa81a; color: #fff; padding: 1px; }
.titlebar.active .winbtns { background: none; }
.deal-grid { flex: none; display: grid; grid-template-columns: 127fr 164fr 126fr; grid-template-rows: 103px 89px; gap: 0 1px; background: #93adb9; }
.deal-grid > * { background: #cad9e0; }
.summary { display: grid; grid-template-columns: 48px 1fr; align-content: start; margin: 0; padding: 12px 0 0 4px; grid-auto-rows: 12px; row-gap: 1px; }
.summary dd { display: flex; align-items: center; gap: 2px; margin: 0; height: 10px; }
.summary dd svg { width: 11px; height: 11px; }
.summary dt { white-space: nowrap; }
.setup { display: flex; flex-direction: column; align-items: center; padding-top: 10px; }
.bigqty { display: flex; flex-direction: column; align-items: center; }
.bigqty input { width: 57px; height: 23px; background: #fff; border: 1px solid #b5c3ca; font-size: 16px; text-align: right; padding-right: 2px; }
.guardline { display: flex; align-items: center; gap: 4px; margin-top: 6px; padding: 0 6px 12px; border-bottom: 1px solid #a3b7c1; }
.guardline > label:nth-child(3) { margin-left: 8px; }
.tickline { display: flex; gap: 51px; margin-top: 6px; }
.tickline span { display: flex; width: 30px; height: 14px; border: 1px solid #a9bac3; background: #fff; }
.tickline input { width: 22px; text-align: right; padding-right: 2px; }
.tickline .spin { width: 6px; height: 12px; }
.trade { display: flex; flex-direction: column; align-items: center; padding-top: 4px; }
.trade.sell { background: #ecb7b9; }
.trade.buy { background: #abd3a8; }
.trade span { font-size: 16px; line-height: 18px; color: rgba(255, 255, 255, .55); }
.trade strong { flex: 1; font-size: 34px; line-height: 56px; font-weight: normal; color: #000; }
.trade small { font-size: 8px; line-height: 12px; }
.middle { display: grid; grid-template-columns: 1fr 1fr; grid-template-rows: 18px 1fr; gap: 1px; padding-top: 1px; background: #a5b9c2; }
.middle button, .actions .grow { background: #cad9e0; color: #9aaab2; }
.middle .wide { grid-column: 1 / 3; }
.actions { flex: none; display: flex; gap: 1px; height: 21px; padding-top: 1px; background: #a5b9c2; }
.actions > * { background: #cad9e0; }
.actions svg { width: 15px; height: 14px; }
.actions .grow { flex: 158; }
.actions .grow.wide { flex: 182; }
.tail { display: flex; align-items: center; justify-content: space-around; width: 57px; }
.positions { width: 100%; border-collapse: collapse; table-layout: fixed; background: #41679a; color: #fff; }
.positions th { height: 12px; padding: 0; font-weight: normal; }
.positions th:first-child { width: 24px; }
.positions th:nth-child(2) { width: 122px; }
.positions th:nth-child(3) { width: 145px; }
.positions svg { display: inline-block; width: 10px; height: 9px; }
.spread { display: flex; justify-content: space-between; margin-top: auto; height: 12px; background: linear-gradient(#a4c2cf, #bcd4de); }
.spread i { font-style: normal; color: #1d7fe0; }
.spread .flip { display: inline-block; rotate: 180deg; }

/* performance window */
.perf { border-width: 0 2px; }
.perf .titlebar { height: 16px; gap: 2px; overflow: hidden; }
.perf .titlebar .caret { margin-left: 5px; }
.period-cut { flex: 1; min-width: 0; height: 12px; margin-left: 3px; padding-top: 1px; background: #fff; }
.caption { position: absolute; left: 2px; top: 1px; margin: 0; white-space: nowrap; }
.edge { position: absolute; right: 0; bottom: 5px; width: 3px; height: 52px; background: #000; }
```

FILE: charts.js
```js
const AXIS_W = 41, AXIS_H = 13;

/* ---- toolbar ---- */
const tools = ['lists', 'depth', 'cursor', 'loupe', 'bell', 'ruler', 'segment', 'line', 'hline', 'vline', 'channel', 'fibo', 'zigzag', 'trash', 'tools', 'cross', 'pitch', 'right', 'up', 'down', 'ellipse', 'rect', 'tri', 'range', 'wedge', 'note'];
document.getElementById('tools').innerHTML = tools.map(t => `<button class="${t === 'cursor' ? 'on' : ''}" aria-label="${t}"><svg><use href="#i-${t}"/></svg></button>`).join('');
const palette = '#f4f4f4 #e4dcdc #cfc8c8 #aaa #8a8a8a #1a1a1a #9cc0f4 #8ab4f0 #6aa0f0 #1c2cf0 #2a34d0 #1818b0 #7a30b0 #ee80b8 #f06868 #e02020 #e83030 #8a4a28 #f08070 #f49060 #ffa868 #fff020 #60f0e0 #90f060 #30e030 #20c020 #30a030 #188a20'.split(' ');
document.getElementById('palette').innerHTML = palette.map(c => `<button style="background:${c}" aria-label="${c}"></button>`).join('');

/* Candle rows: colour, body top, body bottom, wick top, wick bottom.
   Level rows: position, start, end, classes, label, label end. */
const charts = {
  ticks500: {
    units: '50 unités', amount: '500', step: '(x) ticks', name: 'Prix',
    x: [6, 1470], y: [-1014, 1809], first: 18, gap: 20, body: 8,
    ticks: [[-992, '5 025'], [-871, '5 020'], [-748, '5 015'], [-625, '5 010'], [-501, '5 005'], [-378, '5 000', 1], [-255, '4 995'], [-132, '4 990'], [115, '4 980'], [362, '4 970'], [487, '4 965'], [609, '4 960'], [977, '4 945'], [1102, '4 940'], [1227, '4 935'], [1472, '4 925'], [1595, '4 920'], [1717, '4 915']],
    times: [[158, '11:06'], [258, '12:04'], [338, '13:04'], [478, '15:08'], [598, '16:00'], [718, '17:02'], [838, '18:13'], [1038, '21:04'], [1138, '22:04'], [1217, '23:09'], [1296, '20', 1], [1357, '01:00']],
    zone: [1118, 721, 820],
    ma: '6,1188 40,1183 78,1170 118,1160 177,1130 198,1108 217,1102 258,1074 278,1076 318,1069 378,1060 398,1052 450,1050 478,1040 538,1030 578,1021 638,1012 660,982 697,965 738,952 760,928 780,908 797,895 817,889 858,884 1118,876',
    maRed: ['256,1074 278,1076', '398,1052 420,1052'],
    levels: [[-966, 6, 1470, 'red w3', 'mR1 H', 1470], [-606, 6, 1296, 'red w2', 'mR2 J', 1296], [-451, 1039, 1357, 'dred', 'R3 4H', 1357], [-201, 1039, 1357, 'dred', 'R2 4H', 1357], [-134, 1039, 1217, 'dred dash', 'R3 2H', 1217], [-7, 6, 1470, 'red w4', 'mR1 M', 1470], [0, 6, 1296, 'dred', 'R1 J', 1296], [53, 1039, 1217, 'dred dash', 'R2 2H', 1217], [92, 1039, 1357, 'dred w2', 'R1 4H', 1357], [218, 1039, 1217, 'dred dash', 'R1 2H', 1217], [240, 6, 1470, 'white w2 thickdot', 'Piv H', 1470], [343, 1039, 1357, 'white dash', 'Piv 4H', 1357], [377, 6, 1296, 'red w2', 'mR1 J', 1296], [406, 1039, 1217, 'white dash', 'Piv 2H', 1217], [571, 1039, 1217, 'green dash', 'S1 2H', 1217], [609, 1140, 1217, 'dim dash'], [634, 1039, 1357, 'cyan', 'S1 4H', 1357], [759, 1039, 1217, 'green dash', 'S2 2H', 1217], [754, 6, 1296, 'white w2 dash', 'Piv J', 1296], [772, 6, 1296, 'olive long', 'Clo J', 1296], [847, 6, 1470, 'yellow w2 thickdot', 'Clo (H, Pré)', 1470], [886, 1039, 1357, 'cyan', 'S2 4H', 1357], [905, 1140, 1217, 'dim dash'], [924, 1039, 1217, 'green dash', 'S3 2H', 1217], [1122, 1140, 1217, 'dim dash'], [1177, 1039, 1357, 'cyan', 'S3 4H', 1357], [1204, 6, 1296, 'olive dot', 'Clo (J, Pré)', 1296], [1356, 6, 1296, 'green w2', 'mS1 J', 1296], [1417, 1140, 1217, 'dim dash'], [1750, 6, 1470, 'cyan w2', 'mS1 H', 1470]],
    tags: [[-962, '5 023,9', '#f00', 1], [-606, '5 009,2', '#c00'], [-23, '4 985,0', '#f00', 1], [14, '4 984,8', '#c00'], [240, '4 974,9', '#fff', 1], [377, '4 969,4', '#c00'], [721, '4 955,4', '#0d0'], [750, '4 954,1', '#ddd'], [786, '4 953,4', '#ff0', 1], [772, '233T', '#000', 2, '#8dfa9a'], [820, '4 951,4', '#d8b8b8'], [848, '4 950,3', '#e0d800'], [877, '4 949,2', '#0d0'], [1203, '4 935,9', '#e0d800'], [1356, '4 929,7', '#0d0'], [1753, '4 913,7', '#00e8e8', 1]],
    marks: [[157, 702, 's', 'r'], [57, 838, 's', 'r'], [78, 836, 'd', 'r'], [57, 868, 'd', 'r'], [118, 880, 'd', 'r'], [97, 930, 'd', 'r'], [37, 986, 's', 'r'], [78, 1085, 's', 'g'], [57, 1148, 'u', 'g'], [97, 1146, 's', 'g'], [118, 1128, 'u', 'g'], [118, 1156, 's', 'g'], [18, 1255, 'u', 'g'], [18, 1281, 's', 'g'], [37, 1323, 'u', 'g']],
    candles: `r1057,1212,1040,1235 g1033,1220,1000,1305 g935,1040,880,1130 r928,1058,860,1070 g947,1063,925,1130 r950,960,890,1110 g866,966,835,1008 g815,874,715,900 g792,812,640,830 g724,780,716,838 g722,725,655,825 r724,890,724,950 r897,1072,818,1076 g1034,1063,1020,1150 g965,1028,920,1045 r958,971,878,1015 r965,1035,925,1045 g897,1035,880,1075 g850,903,818,990 r848,1048,830,1052 g1038,1050,1020,1147 g874,1047,865,1060 g798,879,755,890 g656,804,640,815 r656,780,625,815 g590,788,580,792 r582,682,565,690 g595,689,590,725 r595,763,582,792 g753,768,650,805 g675,753,645,760 g648,676,645,720 g587,657,532,685 g487,588,460,600 r487,522,415,550 g452,522,405,530 g402,461,395,515 g217,403,210,415 g114,219,70,255 r118,139,50,155 r130,178,55,195 r180,262,120,275 g240,266,235,415 r248,330,245,405 g273,324,240,445 r278,485,270,510 g433,477,360,600 r438,534,370,565 g471,535,405,545 g384,472,328,530 r379,384,320,435 r373,454,315,460 r446,608,440,685 r612,657,575,705 r660,687,550,830 r693,773,660,773`
  },
  sec30: {
    units: '100 unités', amount: '30', step: '(x) secondes', name: 'Heikin-Ashi',
    x: [10, 1463], y: [6, 1262], first: 19, gap: 11.87, body: 4,
    ticks: [[297, '4 970'], [488, '4 965'], [677, '4 960'], [1060, '4 950']],
    times: [[102, '21:12'], [197, '21:16'], [292, '21:20'], [387, '21:24'], [482, '21:28'], [577, '21:32'], [672, '21:36'], [767, '21:40'], [862, '21:44'], [956, '21:48'], [1051, '21:52'], [1146, '21:56'], [1243, '22:00', 1], [1337, '22:04']],
    zone: [1289, 851, 1003],
    ma: '10,1093 350,1092 365,1091 1110,1090 1289,1088',
    levels: [[77, 10, 1463, 'dred dash', 'R1 2H', 1466], [110, 10, 1463, 'white w2 thickdot', 'Piv H', 1463], [267, 10, 1463, 'white dash', 'Piv 4H', 1463], [342, 1243, 1463, 'dred dot', 'R1 1H', 1298], [318, 10, 1463, 'red w2', 'mR1 J', 1466], [364, 10, 1463, 'white dash', 'Piv 2H', 1463], [619, 10, 1463, 'green dash', 'S1 2H', 1463], [678, 1243, 1463, 'white dot', 'Piv 1H', 1299], [717, 10, 1463, 'teal w2', 'S1 4H', 1463], [909, 10, 1463, 'green dash', 'S2 2H', 1466], [901, 10, 1463, 'white w2 dash', 'Piv J', 1466], [929, 10, 1463, 'olive long', 'Clo J', 1463], [1045, 10, 1463, 'yellow w2 thickdot', 'Clo (H, Pré)', 1463], [1104, 10, 1463, 'teal w2', 'S2 4H', 1463], [1133, 1243, 1463, 'green dot', 'S1 1H', 1298], [1163, 10, 1463, 'green dash', 'S3 2H', 1463]],
    tags: [[110, '4 974,9', '#fff', 1], [318, '4 969,4', '#c00'], [852, '4 955,4', '#0d0'], [884, '4 954,1', '#ddd'], [938, '4 953,4', '#ff0', 1], [905, '13s', '#000', 2, '#ffee30'], [1003, '4 951,4', '#d8b8b8'], [1046, '4 950,3', '#e0d800'], [1089, '4 949,2', '#0d0']],
    candles: `g240,258,228,262 g235,251,228,255 r238,248,232,270 r248,262,240,292 g252,258,235,275 g250,256,236,265 r252,270,248,292 r261,268,232,280 r262,300,255,320 r281,342,275,375 r312,388,305,415 r350,412,345,445 r379,415,375,430 r396,405,370,445 g382,402,360,405 r388,414,380,445 r402,426,398,445 r414,418,408,425 r416,450,412,485 r432,476,428,508 r452,482,448,520 g452,470,412,480 r459,498,455,518 r478,502,470,515 r488,500,470,520 r492,545,490,558 r518,536,515,550 g505,527,492,530 r515,545,510,580 r530,583,525,600 r556,627,550,670 r590,665,585,680 r627,684,620,700 r655,692,650,740 g644,675,625,680 g635,661,597,665 r645,662,640,680 r656,672,650,695 r665,687,660,705 r675,690,672,712 r684,738,680,793 r710,750,700,770 g728,732,700,768 g683,731,655,735 g686,707,670,712 g683,696,675,710 g668,690,662,695 r677,683,672,708 r682,718,680,750 r700,731,690,755 g680,715,665,720 g671,699,638,712 r684,696,680,730 g690,694,672,712 g663,691,625,695 g655,673,640,680 r664,670,655,690 r666,694,660,710 r681,694,670,720 r687,713,680,735 r699,733,695,745 r717,738,715,760 r727,743,720,770 r735,757,730,790 g745,750,720,765 r745,753,738,770 r750,791,745,827 r767,778,765,785 g748,773,730,778 g726,762,700,770 g679,745,655,750 g624,714,588,720 g605,669,588,675 r636,672,597,740 r654,748,648,755 r702,753,695,765 r728,790,725,825 r757,840,752,865 r800,862,797,885 r830,853,828,868 r840,872,835,885 r855,885,850,900 r875,905,870,938 r906,968,888,1017 r930,975,925,995 g930,952,900,958 g903,942,895,945 g858,923,826,930 g870,892,860,900 g823,882,797,885 g813,850,788,855 r832,848,828,870 g834,840,825,850 r838,846,815,855 g836,844,785,900 g810,842,800,850 g794,826,757,830 r810,833,797,855 r820,863,817,880 r842,864,838,885 r852,877,848,893 r863,900,850,925 g829,883,757,895 r855,928,850,1010 r893,945,888,990 g908,918,885,950 g868,915,847,920 r890,905,870,910`
  },
  ticks50: {
    units: '100 unités', amount: '50', step: '(x) ticks', name: 'Heikin-Ashi',
    x: [10, 1463], y: [210, 1459], first: 19, gap: 12.075, body: 4,
    ticks: [[405, '4 980'], [724, '4 970'], [883, '4 965'], [1043, '4 960']],
    times: [[116, '20:15'], [236, '20:22'], [357, '20:29'], [478, '20:36'], [563, '20:43'], [647, '20:50'], [719, '21:00', 1], [828, '21:11'], [900, '21:18'], [1009, '21:32'], [1081, '21:39'], [1177, '21:47'], [1287, '22:00', 1], [1370, '22:07']],
    zone: [1311, 1189, 1318],
    ma: '10,1397 90,1395 340,1395 370,1392 620,1392 850,1391 1140,1390 1311,1389',
    levels: [[250, 10, 1463, 'red w4', 'mR1 M', 1466], [324, 720, 1463, 'dred dash', 'R2 2H', 1466], [376, 720, 1463, 'dred w2', 'R1 4H', 1466], [378, 1287, 1463, 'dred dot', 'R2 1H', 1342], [538, 720, 1463, 'dred dash', 'R1 2H', 1466], [567, 10, 1463, 'white w2 thickdot', 'Piv H', 1463], [699, 720, 1463, 'white dash', 'Piv 4H', 1463], [761, 1287, 1463, 'dred dot', 'R1 1H', 1342], [742, 10, 1463, 'red w2', 'mR1 J', 1466], [781, 720, 1463, 'white dash', 'Piv 2H', 1463], [995, 720, 1463, 'green dash', 'S1 2H', 1463], [1045, 1287, 1463, 'white dot', 'Piv 1H', 1343], [1077, 720, 1463, 'teal w2', 'S1 4H', 1463], [1238, 720, 1463, 'green dash', 'S2 2H', 1466], [1232, 10, 1463, 'white w2 dash', 'Piv J', 1466], [1254, 10, 1463, 'olive long', 'Clo J', 1466], [1352, 10, 1463, 'yellow w2 thickdot', 'Clo (H, Pré)', 1463], [1402, 720, 1463, 'teal w2', 'S2 4H', 1463], [1424, 1287, 1463, 'green dot', 'S1 1H', 1342], [1451, 720, 1463, 'green dash', 'S3 2H', 1463]],
    tags: [[235, '4 985,0', '#f00', 1], [268, '4 984,8', '#c00'], [568, '4 974,9', '#fff', 1], [741, '4 969,4', '#c00'], [1190, '4 955,4', '#0d0'], [1225, '4 954,1', '#ddd'], [1276, '4 953,4', '#ff0', 1], [1254, '33T', '#000', 2, '#8dfa9a'], [1318, '4 951,4', '#d8b8b8'], [1353, '4 950,3', '#e0d800'], [1388, '4 949,2', '#0d0']],
    candles: `g678,770,595,775 g595,725,570,730 g650,660,610,700 r655,708,650,735 r680,745,675,778 r713,745,710,770 r730,792,725,800 r760,862,755,903 r812,832,795,880 r820,832,790,880 r827,870,822,905 r857,885,848,905 r878,893,865,925 r890,910,880,935 r895,925,890,960 r908,975,905,1022 r938,950,905,1015 g881,944,875,950 g811,908,780,910 g776,858,720,865 g790,817,765,832 r800,810,785,825 r803,811,785,865 g768,811,740,820 r787,797,740,865 r792,833,780,855 r812,902,808,955 r857,910,835,985 g865,885,835,935 g850,875,832,880 r862,885,850,940 r877,922,870,958 r900,905,860,945 g870,903,828,910 g846,886,790,890 g811,867,788,870 g833,840,788,910 r838,919,832,935 r880,935,878,960 r905,940,895,960 r923,935,895,960 g900,928,855,960 g882,912,875,930 g873,898,840,915 r885,897,865,945 g882,892,840,925 g880,888,850,895 g827,884,800,890 g766,856,720,862 g772,812,715,820 g778,795,730,815 g755,785,682,790 r770,776,755,810 r772,780,740,820 g766,776,735,790 g757,775,730,800 g717,766,672,775 g734,740,700,770 r738,742,680,780 r738,744,715,780 g732,742,725,778 g728,736,700,770 g729,734,685,765 g708,735,695,742 g697,722,662,728 g692,708,662,735 g697,702,672,725 r700,722,672,735 r711,773,705,805 r743,815,738,850 r778,806,770,855 r790,808,785,850 r804,865,800,882 r830,882,825,912 r858,910,850,920 r882,943,878,960 r912,1003,908,1045 r957,1025,952,1095 r988,1020,960,1050 r1003,1083,998,1140 r1040,1082,1035,1125 g1046,1060,1020,1080 r1055,1062,1045,1118 g1044,1060,1010,1085 g1040,1055,1012,1090 g1020,1046,998,1050 r1034,1070,1030,1080 r1060,1088,1055,1100 r1068,1100,1065,1130 r1084,1115,1080,1135 r1098,1130,1095,1165 r1112,1130,1085,1155 g1076,1120,1050,1125 g1008,1098,965,1100 g1038,1052,977,1090 r1047,1133,1042,1165 r1089,1186,1085,1230 r1138,1245,1135,1300 r1190,1283,1160,1328 g1232,1238,1165,1260 g1192,1232,1135,1240 g1175,1213,1120,1225 g1167,1192,1110,1195 g1170,1180,1110,1250 r1175,1205,1110,1315 r1203,1278,1180,1305 r1232,1245,1185,1275 r1240,1252,1232,1268`
  },
  min5: {
    units: '100 unités', step: '5 minutes', name: 'Prix', light: true,
    x: [4, 1465], y: [6, 1953], first: 12, gap: 12.05, body: 4, split: 1419,
    ticks: [[49, '5 000', 1], [143, '4 995'], [237, '4 990'], [425, '4 980'], [612, '4 970'], [705, '4 965'], [799, '4 960'], [1080, '4 945'], [1173, '4 940'], [1268, '4 935'], [1361, '4 930'], [1439, '100', 1], [1487, '90'], [1535, '80'], [1583, '70'], [1631, '60'], [1680, '50', 1], [1729, '40'], [1825, '20'], [1872, '10'], [1920, '0', 1]],
    times: [[158, '16:00'], [302, '17:00'], [446, '18:00'], [591, '19:00'], [735, '20:00'], [879, '21:00'], [1024, '22:00'], [1168, '23:00'], [1312, '20', 1]],
    zone: [1024, 885, 958],
    ma: '6,1133 45,1132 60,1127 100,1121 135,1113 230,1103 243,1082 260,1077 280,1075 292,1070 335,1062 350,1055 365,1040 375,1028 390,1020 430,1014 480,1011 560,1009 740,1007 880,1004 940,1002 1024,1002',
    levels: [[184, 879, 1457, 'red', 'R2 4H', 1457], [235, 879, 1168, 'red dash', 'R3 2H', 1168], [243, 1024, 1168, 'red dot', 'R3 1H', 1079], [331, 4, 1312, 'red w4', 'R1 J', 1312], [331, 1312, 1465, 'red w3', 'mR1 M', 1463], [377, 879, 1168, 'red dash', 'R2 2H', 1168], [406, 879, 1457, 'red', 'R1 4H', 1457], [409, 1024, 1168, 'red dot', 'R2 1H', 1079], [502, 879, 1168, 'red dash', 'R1 2H', 1168], [519, 4, 1465, 'white w2 thickdot', 'Piv H', 1463], [597, 879, 1457, 'white dash', 'Piv 4H', 1457], [622, 4, 1312, 'red w2', 'mR1 J', 1312], [634, 1024, 1168, 'red dot', 'R1 1H', 1079], [645, 879, 1168, 'white dash', 'Piv 2H', 1168], [771, 879, 1168, 'green dash', 'S1 2H', 1168], [800, 1024, 1168, 'white dot', 'Piv 1H', 1079], [819, 879, 1457, 'cyan w2', 'S1 4H', 1457], [912, 879, 1168, 'green dash', 'S2 2H', 1168], [909, 4, 1312, 'white w2 dash', 'Piv J', 1312], [922, 4, 1312, 'yellow w2 long', 'Clo J', 1312], [980, 4, 1465, 'yellow w2 thickdot', 'Clo (H, Pré)', 1463], [1009, 879, 1457, 'cyan', 'S2 4H', 1457], [1023, 1024, 1168, 'green dot', 'S1 1H', 1079], [1038, 879, 1168, 'green dash', 'S3 2H', 1168], [1189, 1024, 1168, 'green dash', 'S2 1H', 1079], [1229, 879, 1457, 'cyan', 'S3 4H', 1457], [1250, 4, 1312, 'olive long', 'Clo (J, Pré)', 1312], [1366, 4, 1312, 'dgreen w2', 'mS1 J', 1312], [1413, 1024, 1168, 'green dot', 'S3 1H', 1079]],
    tags: [[331, '4 985,0', '#f01818', 1], [520, '4 974,9', '#000', 1], [885, '4 955,4', '#2e2'], [958, '4 951,4', '#ecc'], [981, '4 950,3', '#e8e000'], [1008, '4 949,2', '#0d0'], [922, '2m43s', '#000', 2, '#8dfa9a'], [1249, '4 935,9', '#e8e000'], [1764, '31,465', '#000', 1], [1801, '26,185', '#ff0', 1]],
    candles: `g976,988,912,992 g952,972,938,975 r948,960,930,982 g916,962,900,965 g840,916,820,920 r841,872,815,880 r873,895,860,957 g779,896,766,900 r783,806,780,825 r800,844,798,880 r841,892,782,910 r886,908,850,942 g893,912,822,915 r890,906,880,946 g856,904,848,910 r853,867,830,880 g829,867,825,885 r829,840,826,865 g790,840,780,857 g760,790,750,800 g734,760,730,795 r730,755,685,770 g711,752,705,755 g677,710,673,720 r675,706,645,754 g660,706,642,720 r660,706,640,715 g704,708,660,720 g605,706,600,726 g534,605,520,608 g478,530,460,568 g426,474,390,492 g393,420,375,435 r388,444,385,455 g407,445,405,472 g403,413,375,448 r397,456,395,460 r457,465,430,490 g461,464,440,473 g453,461,433,465 g443,459,430,468 r440,453,425,465 r453,530,450,532 r528,541,520,545 r545,588,540,600 r580,594,575,610 r594,625,590,630 r625,650,615,652 g615,645,610,655 r600,630,560,635 g525,621,520,622 r526,553,523,565 r553,587,550,592 r585,643,580,645 g618,635,600,637 g590,616,583,630 g546,588,540,590 g537,546,530,570 r543,547,530,560 r553,606,548,610 g545,602,525,605 g528,555,522,678 r529,714,527,716 r708,730,650,733 g660,728,608,790 r668,705,620,765 g645,699,640,738 r651,751,648,753 g697,746,670,750 g657,694,615,700 g627,653,592,668 r622,628,582,658 g625,627,580,645 g590,613,575,628 r584,675,580,684 r668,722,640,727 r726,810,695,815 r805,820,760,852 r806,820,770,830 r810,826,775,842 g766,830,752,892 r770,920,763,922 g876,920,830,970 g855,873,838,955 r912,922,880,955`,
    rsi: '6,1641 40,1635 58,1612 72,1600 86,1623 108,1595 122,1615 132,1623 145,1643 158,1642 170,1648 185,1635 220,1628 250,1602 290,1585 328,1578 338,1592 358,1565 378,1542 397,1530 420,1547 434,1540 446,1550 458,1572 508,1571 520,1590 535,1630 555,1656 582,1677 602,1667 627,1636 648,1670 662,1676 680,1662 698,1645 712,1643 722,1661 748,1657 760,1685 772,1721 806,1708 832,1721 855,1680 890,1667 905,1678 925,1720 940,1748 978,1744 1000,1774 1014,1755 1026,1770',
    fast: '6,1618 40,1610 58,1578 72,1568 86,1605 108,1568 122,1598 132,1612 145,1642 158,1640 170,1652 185,1628 220,1622 250,1578 270,1570 290,1558 328,1550 338,1575 362,1528 378,1512 397,1498 420,1525 434,1520 458,1570 508,1567 530,1645 545,1675 560,1700 582,1718 602,1702 627,1645 648,1696 662,1703 680,1685 698,1650 712,1650 722,1682 748,1668 772,1756 806,1736 832,1753 855,1680 890,1661 905,1680 925,1750 940,1780 965,1780 978,1772 1000,1809 1014,1780 1026,1795'
  }
};

function scale(domain, size) { return v => Math.round((v - domain[0]) / (domain[1] - domain[0]) * size); }
function path(points, X, Y) { return points.split(' ').map(p => { const [a, b] = p.split(','); return X(a) + ',' + Y(b); }).join(' '); }

function drawChart(svg, c, id) {
  const W = svg.clientWidth, H = svg.clientHeight, w = W - AXIS_W, h = H - AXIS_H;
  const X = scale(c.x, w), Y = scale(c.y, h);
  const up = c.light ? '#1c9a1c' : '#6bf574', down = c.light ? '#f42020' : '#ff7073';
  const stops = c.light ? ['#cbcbcb', '#989898'] : ['#343434', '#000'];
  let s = `<defs><linearGradient id="g-${id}" x2="0" y2="1"><stop stop-color="${stops[0]}"/><stop offset="1" stop-color="${stops[1]}"/></linearGradient><clipPath id="p-${id}"><rect width="${w}" height="${h}"/></clipPath></defs>`;
  s += `<rect width="${W}" height="${H}" fill="#fff"/><rect width="${w}" height="${h}" fill="url(#g-${id})"/><g clip-path="url(#p-${id})">`;
  const grid = c.light ? 'rgba(0,0,0,.1)' : 'rgba(255,255,255,.04)';
  c.ticks.forEach(t => s += `<line x2="${w}" y1="${Y(t[0])}" y2="${Y(t[0])}" stroke="${grid}"/>`);
  c.times.forEach(t => s += `<line y2="${h}" x1="${X(t[0])}" x2="${X(t[0])}" stroke="${grid}"/>`);
  const [zx, zt, zb] = c.zone;
  s += `<rect x="${X(zx)}" y="${Y(zt)}" width="${w - X(zx)}" height="${Y(zb) - Y(zt)}" fill="${c.light ? '#8cc48c' : '#2c722e'}"/><path d="M${X(zx)} ${Y(zt)}H${w}" stroke="#0e0"/><path d="M${X(zx)} ${Y(zb)}H${w}" stroke="#e8c8b8"/>`;
  if (c.rsi) {
    const mid = Y(1680), area = `${X(6)},${mid} ${path(c.rsi, X, Y)} ${X(1026)},${mid}`;
    s += `<rect y="${Y(c.split)}" width="${w}" height="2" fill="#d8d8d8"/><rect y="${Y(c.split) + 2}" width="${w}" height="${h}" fill="#9f9f9f" opacity=".6"/>`;
    s += `<clipPath id="u-${id}"><rect width="${w}" height="${mid}"/></clipPath><clipPath id="d-${id}"><rect y="${mid}" width="${w}" height="${h}"/></clipPath>`;
    s += `<polygon points="${area}" fill="#66c766" clip-path="url(#u-${id})"/><polygon points="${area}" fill="#c86464" clip-path="url(#d-${id})"/>`;
    s += `<path class="w2" d="M0 ${Y(1439)}H${w}" stroke="#1fe41f"/><path class="dash" d="M0 ${Y(1583)}H${w}" stroke="#2be02b"/><path class="dot" d="M0 ${mid}H${w}" stroke="#e4e4e4"/><path class="dash" d="M0 ${Y(1776)}H${w}" stroke="#f02020"/><path class="w2" d="M0 ${Y(1920)}H${w}" stroke="#f01010"/>`;
    s += `<polyline class="soft" points="${path(c.rsi, X, Y)}" fill="none" stroke="#222" stroke-width="1.5"/><polyline class="soft" points="${path(c.fast, X, Y)}" fill="none" stroke="#e2e02c" stroke-dasharray="4 1"/>`;
  }
  c.candles.trim().split(/\s+/).forEach((k, i) => {
    const v = k.slice(1).split(',').map(Number), x = X(c.first + i * c.gap), col = k[0] === 'g' ? up : down;
    const wick = c.light ? (k[0] === 'g' ? '#145014' : '#d01818') : (k[0] === 'g' ? '#3c8c42' : '#b05052');
    s += `<rect x="${x}" y="${Y(v[2])}" width="1" height="${Y(v[3]) - Y(v[2])}" fill="${wick}"/><rect x="${x - c.body / 2}" y="${Y(v[0])}" width="${c.body}" height="${Math.max(1, Y(v[1]) - Y(v[0]))}" fill="${col}"/>`;
  });
  (c.marks || []).forEach(([mx, my, t, k]) => {
    const x = X(mx), y = Y(my), f = k === 'r' ? down : up;
    const d = t === 's' ? 'M-2-2h5v5h-5z' : t === 'u' ? 'M0-4l3 4h-2v4h-2v-4h-2z' : 'M0 4l3-4h-2v-4h-2v4h-2z';
    s += `<path class="soft" transform="translate(${x} ${y})" d="${d}" fill="${f}"/>`;
  });
  s += `<polyline class="soft" points="${path(c.ma, X, Y)}" fill="none" stroke="#0f0" stroke-width="${c.light || c.body === 4 ? 3 : 2}"/>`;
  (c.maRed || []).forEach(p => s += `<polyline class="w2" points="${path(p, X, Y)}" fill="none" stroke="#f00"/>`);
  c.levels.forEach(l => s += `<path class="lv ${l[3]}" d="M${X(l[1])} ${Y(l[0])}${/w2|w4/.test(l[3]) ? '' : '.5'}H${X(l[2])}"/>`);
  c.levels.forEach(l => { if (l[4]) s += `<text class="lb ${l[3].split(' ')[0].replace('teal', 'cyan').replace('olive', 'yellow')}" x="${X(l[5])}" y="${Y(l[0]) - 2}" text-anchor="end">${l[4]}</text>`; });
  const foot = c.split ? Y(c.split) : h;
  s += `<text class="credit" x="2" y="${foot - 2}">© IT-Finance.com Données indicatives</text>`;
  s += `</g><text x="${c.light ? 80 : c.name === 'Prix' ? 56 : 84}" y="9" fill="${c.light ? '#f01010' : '#d80000'}">Jour : +Haut 4 982,6 +Bas 4 916,8</text>`;
  c.ticks.forEach(t => s += `<path d="M${w} ${Y(t[0])}.5h3" stroke="#666"/><text class="axis ${t[2] ? 'bold' : ''}" x="${w + 3}" y="${Y(t[0]) + 3}">${t[1]}</text>`);
  c.times.forEach(t => s += `<text class="axis ${t[2] ? 'bold' : ''}" text-anchor="middle" x="${X(t[0])}" y="${h + 11}">${t[1]}</text>`);
  c.tags.forEach(([y, label, col, kind, bg]) => {
    const th = kind === 2 ? 13 : kind ? 12 : 9, tw = kind === 2 ? label.length * 6 + 2 : kind ? 35 : 29;
    s += `<rect x="${w + 3}" y="${Y(y) - (th >> 1)}" width="${tw}" height="${th}" fill="${bg || (c.light ? '#9c9c9c' : '#16161a')}"/><text class="${kind ? 'big' : ''}" x="${w + 4}" y="${Y(y) + (kind ? 4 : 3)}" fill="${col}">${label}</text>`;
  });
  svg.innerHTML = s;
}

function drawPerf(svg) {
  const W = svg.clientWidth, H = svg.clientHeight, w = W - 38, h = H - 14;
  const X = scale([43, 575], w), Y = scale([72, 855], h);
  const pts = [[43, 205], [57, 152], [70, 139], [84, 205], [97, 371], [111, 466], [123, 629], [136, 792], [149, 628], [214, 538], [254, 447], [280, 433], [294, 495], [320, 402], [356, 362], [374, 353], [396, 330], [410, 343], [436, 296], [450, 286], [463, 380], [489, 318], [502, 430], [515, 348]];
  let s = `<defs><linearGradient id="g-perf" x2="0" y2="1"><stop stop-color="#c8eaf6"/><stop offset="1" stop-color="#abcedb"/></linearGradient></defs><rect width="${W}" height="${H}" fill="#fff"/><rect width="${w}" height="${Y(537)}" fill="url(#g-perf)"/><rect y="${Y(537)}" width="${w}" height="${h - Y(537)}" fill="#b5a6b3"/>`;
  [85, 139, 205, 272, 338, 405, 471, 537, 603, 670, 736, 802].forEach((y, i) => {
    s += `<path d="M0 ${Y(y)}.5H${w + 3}" stroke="rgba(60,90,110,.16)"/>`;
    if (i !== 4 && i !== 7) s += `<text class="axis ${i === 2 ? 'bold' : ''}" x="${w + 4}" y="${Y(y) + 3}">${4 - 2 * i}</text>`;
  });
  [[173, 10], [304, 20], [436, 30], [563, 40]].forEach(([x, l]) => s += `<path d="M${X(x)}.5 0V${h}" stroke="rgba(60,90,110,.16)"/><text class="axis" text-anchor="middle" x="${X(x)}" y="${h + 11}">${l}</text>`);
  s += `<path d="M0 ${Y(205)}.5H${w}" stroke="#4848e0"/>`;
  pts.slice(1).forEach((p, i) => { const q = pts[i]; s += `<path class="soft" d="M${X(q[0])} ${Y(q[1])}L${X(p[0])} ${Y(p[1])}" stroke="${p[1] < q[1] ? '#20a050' : '#d04050'}"/>`; });
  [1, 2, 4, 5, 6, 7].forEach(i => s += `<circle class="soft" cx="${X(pts[i][0])}" cy="${Y(pts[i][1])}" r="1.500" fill="#dde" stroke="${i < 3 ? '#20a050' : '#d04050'}"/>`);
  s += `<rect x="${w + 2}" y="${Y(343) - 5}" width="17" height="11" fill="#f4c414"/><text class="axis" x="${w + 3}" y="${Y(343) + 3}">-4,2</text><rect x="${w + 2}" y="${Y(537) - 6}" width="14" height="11" fill="#fff" stroke="#9ab"/><text x="${w + 3}" y="${Y(537) + 3}" fill="#e04040">-10</text><text x="2" y="${h - 3}" fill="#f01020">© IT-Finance.com</text>`;
  svg.innerHTML = s;
}

const template = document.getElementById('chart-window');
document.querySelectorAll('[data-chart]').forEach(win => {
  const c = charts[win.dataset.chart];
  win.append(template.content.cloneNode(true));
  win.querySelector('.units option').textContent = c.units;
  win.querySelector('.step option').textContent = c.step;
  win.querySelector('.name').textContent = c.name;
  if (c.amount) win.querySelector('.amount').value = c.amount; else win.classList.add('single');
  if (win.dataset.chart === 'ticks500') win.classList.add('wide-thumb');
  if (c.rsi) win.querySelector('.plot').insertAdjacentHTML('beforeend', '<div class="legend rsi"><span>Relative strength index (RSI) (21) Relative strength index (RSI) (14)</span><svg><use href="#i-wrench"/></svg><svg><use href="#i-window"/></svg><svg><use href="#i-x-round"/></svg></div>');
});

function render() {
  document.querySelectorAll('[data-chart]').forEach(win => drawChart(win.querySelector('.canvas'), charts[win.dataset.chart], win.dataset.chart));
  drawPerf(document.getElementById('perf'));
}
render();
window.addEventListener('resize', render);
```
